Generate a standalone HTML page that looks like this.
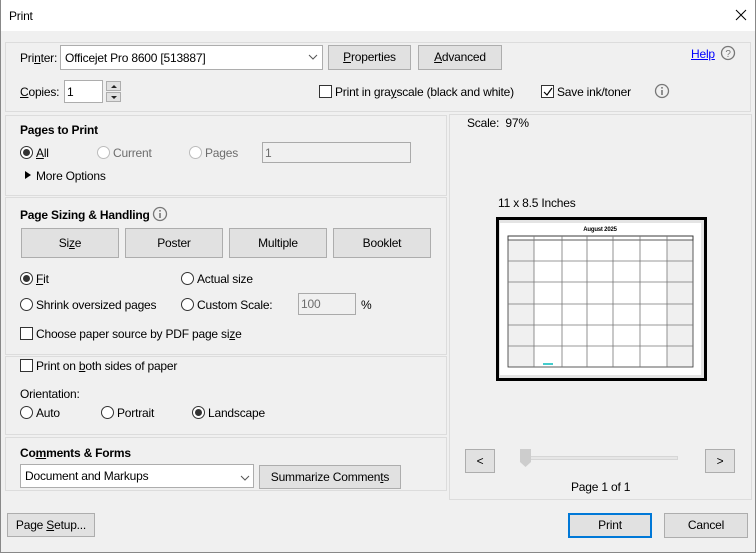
<!DOCTYPE html>
<html><head><meta charset="utf-8"><style>
*{margin:0;padding:0;box-sizing:border-box}
body{width:756px;height:553px;background:#f0f0f0;font-family:"Liberation Sans",sans-serif;font-size:12px;color:#000;position:relative;overflow:hidden;letter-spacing:-0.2px}
.a{position:absolute;white-space:nowrap}
.t{position:absolute;white-space:nowrap;line-height:14px}
.box{position:absolute;border:1px solid #dcdcdc}
.btn{position:absolute;background:#e1e1e1;border:1px solid #adadad;text-align:center;font-size:12px}
.in{position:absolute;background:#fff;border:1px solid #adadad}
.rad{position:absolute;width:13px;height:13px;border:1px solid #333;border-radius:50%;background:#fff}
.rad.on::after{content:"";position:absolute;left:2px;top:2px;width:7px;height:7px;border-radius:50%;background:#333}
.rad.dis{border-color:#bcbcbc}
.chk{position:absolute;width:13px;height:13px;border:1px solid #333;background:#fff}
.b{font-weight:bold}
u{text-decoration:underline}
</style></head><body>
<div class="a" style="left:0;top:0;width:756px;height:31px;background:#fff"></div>
<div class="t" style="left:9px;top:9px">Print</div>
<svg class="a" style="left:735px;top:9px" width="12" height="12"><path d="M1 1L11 11M11 1L1 11" stroke="#000" stroke-width="1"/></svg>
<div class="a" style="left:0;top:0;width:1px;height:553px;background:#888"></div>
<div class="a" style="left:755px;top:0;width:1px;height:553px;background:#888"></div>
<div class="a" style="left:0;top:552px;width:756px;height:1px;background:#888"></div>

<div class="box" style="left:5px;top:42px;width:746px;height:70px"></div>
<div class="t" style="left:20px;top:51px">Pri<u>n</u>ter:</div>
<div class="in" style="left:60px;top:45px;width:263px;height:25px"></div>
<div class="t" style="left:65px;top:51px">Officejet Pro 8600 [513887]</div>
<svg class="a" style="left:308px;top:54px" width="10" height="6"><path d="M1 1L5 5L9 1" stroke="#555" fill="none"/></svg>
<div class="btn" style="left:328px;top:45px;width:83px;height:25px;line-height:23px"><u>P</u>roperties</div>
<div class="btn" style="left:418px;top:45px;width:84px;height:25px;line-height:23px"><u>A</u>dvanced</div>
<div class="t" style="left:691px;top:47px;color:#0000ff;text-decoration:underline">Help</div>
<svg class="a" style="left:720px;top:45px" width="16" height="16"><circle cx="8" cy="8" r="6.5" stroke="#777" fill="none" stroke-width="1.3"/><text x="8" y="12" font-size="10" text-anchor="middle" fill="#777" font-family="Liberation Sans">?</text></svg>

<div class="t" style="left:20px;top:85px"><u>C</u>opies:</div>
<div class="in" style="left:64px;top:80px;width:39px;height:23px"></div>
<div class="t" style="left:67px;top:85px">1</div>
<div class="btn" style="left:106px;top:81px;width:15px;height:10px"></div>
<div class="btn" style="left:106px;top:92px;width:15px;height:10px"></div>
<svg class="a" style="left:110px;top:83px" width="8" height="18"><path d="M1 5L4 2L7 5Z M1 13L4 16L7 13Z" fill="#222"/></svg>
<div class="chk" style="left:319px;top:85px"></div>
<div class="t" style="left:335px;top:85px">Print in gra<u>y</u>scale (black and white)</div>
<div class="chk" style="left:541px;top:85px"></div>
<svg class="a" style="left:542px;top:86px" width="12" height="12"><path d="M2 6L5 9L10 2" stroke="#000" fill="none" stroke-width="1.2"/></svg>
<div class="t" style="left:557px;top:85px">Save ink/toner</div>
<svg class="a" style="left:654px;top:83px" width="16" height="16"><circle cx="8" cy="8" r="6.5" stroke="#777" fill="none" stroke-width="1.3"/><rect x="7.2" y="7" width="1.6" height="5" fill="#777"/><rect x="7.2" y="4" width="1.6" height="1.6" fill="#777"/></svg>

<div class="box" style="left:5px;top:115px;width:442px;height:81px"></div>
<div class="t b" style="left:20px;top:123px">Pages to Print</div>
<div class="rad on" style="left:20px;top:146px"></div><div class="t" style="left:36px;top:146px"><u>A</u>ll</div>
<div class="rad dis" style="left:97px;top:146px"></div><div class="t" style="left:113px;top:146px;color:#6d6d6d">Current</div>
<div class="rad dis" style="left:189px;top:146px"></div><div class="t" style="left:205px;top:146px;color:#6d6d6d">Pages</div>
<div class="in" style="left:262px;top:142px;width:149px;height:21px;background:#f0f0f0;border-color:#aaa"></div>
<div class="t" style="left:265px;top:146px;color:#6d6d6d">1</div>
<svg class="a" style="left:25px;top:171px" width="6" height="8"><path d="M0 0L6 4L0 8Z" fill="#000"/></svg>
<div class="t" style="left:36px;top:169px">More Options</div>

<div class="box" style="left:5px;top:197px;width:442px;height:158px"></div>
<div class="t b" style="left:20px;top:208px">Page Sizing &amp; Handling</div>
<svg class="a" style="left:152px;top:206px" width="16" height="16"><circle cx="8" cy="8" r="6.5" stroke="#777" fill="none" stroke-width="1.3"/><rect x="7.2" y="7" width="1.6" height="5" fill="#777"/><rect x="7.2" y="4" width="1.6" height="1.6" fill="#777"/></svg>
<div class="btn" style="left:21px;top:228px;width:98px;height:30px;line-height:28px">Si<u>z</u>e</div>
<div class="btn" style="left:125px;top:228px;width:98px;height:30px;line-height:28px">Poster</div>
<div class="btn" style="left:229px;top:228px;width:98px;height:30px;line-height:28px">Multiple</div>
<div class="btn" style="left:333px;top:228px;width:98px;height:30px;line-height:28px">Booklet</div>
<div class="rad on" style="left:20px;top:272px"></div><div class="t" style="left:36px;top:272px"><u>F</u>it</div>
<div class="rad" style="left:181px;top:272px"></div><div class="t" style="left:197px;top:272px">Actual size</div>
<div class="rad" style="left:20px;top:298px"></div><div class="t" style="left:36px;top:298px">Shrink oversized pages</div>
<div class="rad" style="left:181px;top:298px"></div><div class="t" style="left:197px;top:298px">Custom Scale:</div>
<div class="in" style="left:298px;top:293px;width:58px;height:22px;background:#f0f0f0;border-color:#aaa"></div>
<div class="t" style="left:301px;top:297px;color:#6d6d6d">100</div>
<div class="t" style="left:361px;top:298px">%</div>
<div class="chk" style="left:20px;top:327px"></div><div class="t" style="left:36px;top:327px">Choose paper source by PDF page si<u>z</u>e</div>

<div class="box" style="left:5px;top:356px;width:442px;height:79px"></div>
<div class="chk" style="left:20px;top:359px"></div><div class="t" style="left:36px;top:359px">Print on <u>b</u>oth sides of paper</div>
<div class="t" style="left:20px;top:387px">Orientation:</div>
<div class="rad" style="left:20px;top:406px"></div><div class="t" style="left:36px;top:406px">Auto</div>
<div class="rad" style="left:101px;top:406px"></div><div class="t" style="left:117px;top:406px">Portrait</div>
<div class="rad on" style="left:192px;top:406px"></div><div class="t" style="left:208px;top:406px">Landscape</div>

<div class="box" style="left:5px;top:437px;width:442px;height:54px"></div>
<div class="t b" style="left:20px;top:446px">Co<u>m</u>ments &amp; Forms</div>
<div class="in" style="left:20px;top:464px;width:234px;height:24px"></div>
<div class="t" style="left:25px;top:469px">Document and Markups</div>
<svg class="a" style="left:240px;top:475px" width="10" height="6"><path d="M1 1L5 5L9 1" stroke="#555" fill="none"/></svg>
<div class="btn" style="left:259px;top:465px;width:142px;height:24px;line-height:22px">Summarize Commen<u>t</u>s</div>

<div class="box" style="left:449px;top:114px;width:303px;height:386px"></div>
<div class="t" style="left:467px;top:116px">Scale:&nbsp; 97%</div>
<div class="t" style="left:498px;top:196px">11 x 8.5 Inches</div>
<svg class="a" style="left:496px;top:217px" width="211" height="165">
<rect x="1.5" y="1.5" width="208" height="161" fill="#e4e4e4" stroke="#000" stroke-width="3"/>
<rect x="4" y="6" width="201" height="152" fill="#fff"/>
<text x="104" y="14" font-size="6" font-weight="bold" text-anchor="middle" font-family="Liberation Sans">August 2025</text>
<rect x="12" y="23" width="26" height="127" fill="#f0f0f0"/>
<rect x="171" y="23" width="26" height="127" fill="#f0f0f0"/>
<rect x="12" y="19" width="185" height="4" fill="#fff" stroke="#333" stroke-width="0.8"/>
<g stroke="#777" stroke-width="0.8" fill="none">
<rect x="12" y="19" width="185" height="131" stroke="#333"/>
<path d="M38 19V150M66 19V150M91 19V150M117 19V150M144 19V150M171 19V150M12 44H197M12 65H197M12 87H197M12 108H197M12 129H197"/>
</g>
<rect x="47" y="146" width="10" height="2" fill="#4cc"/>
</svg>
<div class="btn" style="left:465px;top:449px;width:30px;height:24px;line-height:22px">&lt;</div>
<div class="btn" style="left:705px;top:449px;width:30px;height:24px;line-height:22px">&gt;</div>
<div class="a" style="left:527px;top:456px;width:151px;height:4px;background:#e6e6e6;border:1px solid #d6d6d6"></div>
<svg class="a" style="left:520px;top:449px" width="12" height="19"><path d="M0 0H11V13L5.5 18L0 13Z" fill="#cdcdcd"/></svg>
<div class="t" style="left:571px;top:480px">Page 1 of 1</div>

<div class="btn" style="left:7px;top:513px;width:88px;height:24px;line-height:22px">Page <u>S</u>etup...</div>
<div class="btn" style="left:568px;top:513px;width:84px;height:25px;line-height:21px;border:2px solid #0078d7">Print</div>
<div class="btn" style="left:664px;top:513px;width:84px;height:25px;line-height:23px">Cancel</div>
</body></html>
